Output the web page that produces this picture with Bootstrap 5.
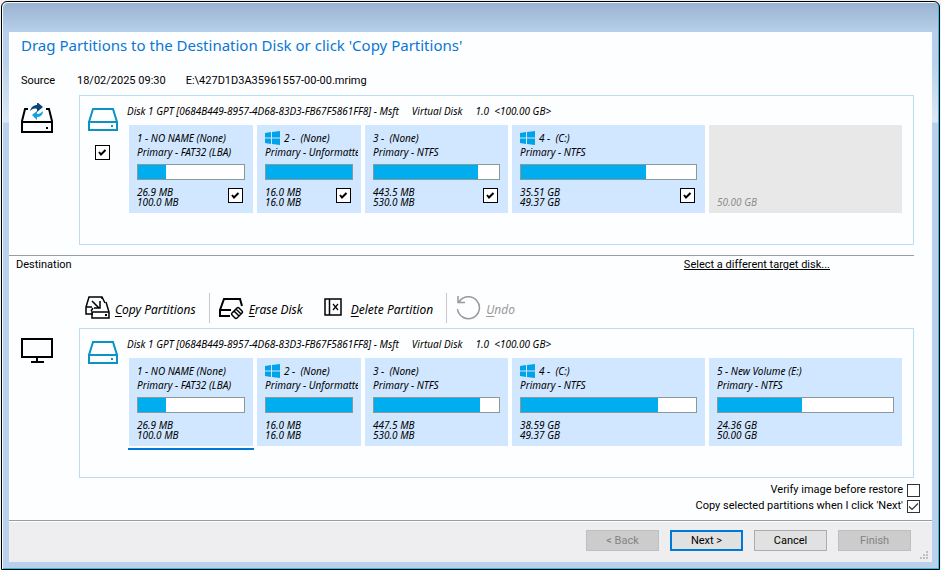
<!DOCTYPE html>
<html lang="en">
<head>
<meta charset="utf-8">
<meta name="viewport" content="width=device-width, initial-scale=1">
<title>Copy Partitions</title>
<link href="https://cdn.jsdelivr.net/npm/bootstrap@5.3.0/dist/css/bootstrap.min.css" rel="stylesheet">
<style>
  body { background: #f0f0f0; font-family: Tahoma, Roboto, "Open Sans", sans-serif; font-size: 11px; line-height: 14px; color: #000; }
  .window-frame { min-height: calc(100vh - 1px); margin: 1px 1px 0; padding: 0 7px 7px; border: 1px solid #000; border-radius: 6px 6px 0 0;
    box-shadow: inset 1px 1px #f4fbff, inset -1px -1px #22c3e6;
    background: linear-gradient(#98b2d1 0, #b7cfe9 30px, #b9d1ea 60px, #dce8f6 120px, #b9d1ea 121px); }
  .title-strip { height: 30px; }
  .page-body { background: #fdfeff; padding-right: 18px; }
  .page-title { font-family: "Noto Sans", sans-serif; font-size: 15px; line-height: 20px; color: #0b76d4; padding: 3px 0 0 12px; }
  .side-col { width: 70px; flex: none; padding-left: 12px; }
  .source-row { padding: 19px 0 7px; gap: 20px; }
  .source-row .side-col { margin-right: -22px; }
  .disk-panel { border: 1px solid #bcdcf4; min-height: 150px; padding: 8px 11px 0 8px; }
  .disk-col { width: 41px; flex: none; padding-top: 3px; }
  .fine { font-family: "Noto Sans", sans-serif; font-size: 10px; font-style: italic; white-space: pre; }
  .disk-title { line-height: 14px; margin: 0 0 7px -2px; }
  .parts { display: grid; grid-template-columns: 124fr 104fr 143fr 193fr 193fr; gap: 4px; }
  .part { position: relative; min-width: 0; height: 88px; background: #d1e7ff; padding: 6px 3px 6px 8px; }
  .part-free { background: #e8e8e8; color: #8c8c8c; }
  .part-selected::after { content: ""; position: absolute; left: -1px; right: -1px; bottom: -4px; height: 2px; background: #0078d7; }
  .part-line { height: 14px; line-height: 14px; overflow: hidden; }
  .usage { height: 16px; margin: 5px 5px 7px 0; border: 1px solid #8a9a98; border-radius: 0; background: #fff; }
  .usage .progress-bar { background: #00adef; }
  .sizes { line-height: 10px; }
  .form-check-input.tick { width: 15px; height: 15px; margin: 1px 7px 0 0; border: 1px solid #000; border-radius: 0; background: #fff; flex: none; }
  .form-check-input.tick:checked { background: #fff url("data:image/svg+xml,%3Csvg xmlns='http://www.w3.org/2000/svg' viewBox='0 0 13 13'%3E%3Cpath d='M3 6l2 2.500 4.500-4.500' fill='none' stroke='%23000' stroke-width='2'/%3E%3C/svg%3E") center/13px; }
  .form-check-input.option { width: 13px; height: 13px; margin: 0; border: 1px solid #333; border-radius: 0; background: #fff; }
  .form-check-input.option:checked { background: #fff url("data:image/svg+xml,%3Csvg xmlns='http://www.w3.org/2000/svg' viewBox='0 0 11 11'%3E%3Cpath d='M1 5.500l3 3L10 2.500' fill='none' stroke='%23333' stroke-width='1.200'/%3E%3C/svg%3E") center/11px; }
  .form-check-input.disk-tick { margin: 14px 0 0 7px; }
  .rule { height: 1px; background: #9b9c9f; }
  .section-rule { margin-top: 10px; }
  .target-row { padding: 2px 0 0 7px; }
  .target-link { color: #000; margin-right: 84px; }
  .tools { height: 30px; margin: 21px 0 5px 76px; font-family: "Noto Sans", sans-serif; font-size: 12px; font-style: italic; }
  .tool { border: 0; border-radius: 0; padding: 0; font: inherit; line-height: 16px; color: #000; display: flex; align-items: center; gap: 5px; }
  .tool span { padding-top: 4px; }
  .tool u { text-underline-offset: 2px; }
  .tool:disabled { border: 0; color: #999; opacity: 1; }
  .del-tool { margin-left: 21px; gap: 9px; }
  .tool-sep { width: 1px; height: 30px; background: #c8c8cc; margin: 0 9px 0 13px; }
  .options { padding: 4px 0 6px; margin-right: -6px; }
  .options .opt { height: 16px; gap: 4px; }
  .actions { background: #eeeef0; border-top: 1px solid #fff; padding: 8px 21px 0 0; height: 41px; gap: 11px; position: relative; }
  .dlg-btn { width: 73px; height: 21px; padding: 0; border: 1px solid #adadad; border-radius: 0; background: #e1e1e1; color: #000; font-size: 11px; line-height: 14px; }
  .dlg-btn.is-default { border: 2px solid #0078d7; }
  .dlg-btn:disabled { background: #ccc; border-color: #bfbfbf; color: #838383; opacity: 1; }
  .grip { position: absolute; right: 4px; bottom: 3px; }
  svg { display: block; flex: none; }
</style>
</head>
<body>
<svg width="0" height="0" class="position-absolute" aria-hidden="true">
  <symbol id="drive" viewBox="0 0 30 24"><path d="M1 15L5 2H25L29 15V23H1V15H29" fill="none" stroke="#0a93c3" stroke-width="2"/><path d="M23 18h2v2h-2z" fill="#0a93c3"/></symbol>
  <symbol id="winlogo" viewBox="0 0 15 14"><path d="M0 2L6 1V6.500H0zM7 .900L15 0V6.500H7zM0 7.500H6V13L0 12zM7 7.500H15V14L7 13z" fill="#00a2e8"/></symbol>
</svg>

<div class="window-frame d-flex flex-column">
  <div class="title-strip"></div>
  <main class="page-body flex-grow-1">
    <h1 class="page-title m-0 fw-normal">Drag Partitions to the Destination Disk or click 'Copy Partitions'</h1>

    <section aria-label="Source">
      <div class="source-row d-flex"><div class="side-col">Source</div><span>18/02/2025 09:30</span><span>E:\427D1D3A35961557-00-00.mrimg</span></div>
      <div class="d-flex">
        <div class="side-col pt-2">
          <svg width="32" height="30" viewBox="0 0 32 30" aria-hidden="true"><path d="M7 6H4L1 18V29H31V18L28 6H25M1 19H31" fill="none" stroke="#000" stroke-width="2"/><path d="M25 24h2v2h-2z"/><path d="M9 8C10 4 13 2 16 2V-1L22 4L16 9V6C13 5 11 6 9 8z" fill="#0c4679"/><path d="M22 8C22 12 19 14 16 14V17L11 12L16 8V11C19 11 20 10 22 8z" fill="#16a0df"/></svg>
        </div>
        <div class="disk-panel d-flex flex-grow-1">
          <div class="disk-col"><svg width="30" height="24" aria-hidden="true"><use href="#drive"/></svg><input type="checkbox" class="form-check-input tick disk-tick d-block" checked aria-label="Disk 1"></div>
          <div class="flex-grow-1">
            <div class="disk-title fine">Disk 1 GPT [0684B449-8957-4D68-83D3-FB67F5861FF8] - Msft     Virtual Disk     1.0  &lt;100.00 GB&gt;</div>
            <div class="parts">
              <div class="part"><div class="part-line fine">1 - NO NAME (None)</div><div class="part-line fine">Primary - FAT32 (LBA)</div><div class="progress usage"><div class="progress-bar" style="width:26%"></div></div><div class="d-flex justify-content-between"><div class="sizes fine">26.9 MB<br>100.0 MB</div><input type="checkbox" class="form-check-input tick" checked aria-label="Partition 1"></div></div>
              <div class="part"><div class="part-line fine d-flex gap-1"><svg width="15" height="14" aria-hidden="true"><use href="#winlogo"/></svg>2 -  (None)</div><div class="part-line fine">Primary - Unformatted</div><div class="progress usage"><div class="progress-bar" style="width:100%"></div></div><div class="d-flex justify-content-between"><div class="sizes fine">16.0 MB<br>16.0 MB</div><input type="checkbox" class="form-check-input tick" checked aria-label="Partition 2"></div></div>
              <div class="part"><div class="part-line fine">3 -  (None)</div><div class="part-line fine">Primary - NTFS</div><div class="progress usage"><div class="progress-bar" style="width:83.5%"></div></div><div class="d-flex justify-content-between"><div class="sizes fine">443.5 MB<br>530.0 MB</div><input type="checkbox" class="form-check-input tick" checked aria-label="Partition 3"></div></div>
              <div class="part"><div class="part-line fine d-flex gap-1"><svg width="15" height="14" aria-hidden="true"><use href="#winlogo"/></svg>4 -  (C:)</div><div class="part-line fine">Primary - NTFS</div><div class="progress usage"><div class="progress-bar" style="width:71.5%"></div></div><div class="d-flex justify-content-between"><div class="sizes fine">35.51 GB<br>49.37 GB</div><input type="checkbox" class="form-check-input tick" checked aria-label="Partition 4"></div></div>
              <div class="part part-free d-flex align-items-end"><div class="sizes fine">50.00 GB</div></div>
            </div>
          </div>
        </div>
      </div>
    </section>

    <div class="rule section-rule"></div>

    <section aria-label="Destination">
      <div class="target-row d-flex justify-content-between"><span>Destination</span><a href="#" class="target-link">Select a different target disk...</a></div>
      <div class="tools d-flex align-items-center">
        <button type="button" class="btn tool"><svg width="25" height="24" viewBox="0 0 25 24" aria-hidden="true"><path d="M8 18H1V11L4 1H17L20 7M1 11H7" fill="none" stroke="#000" stroke-width="1.500"/><path d="M6 15L8 12M21 6L24 16V22H7V16H24M17 1V3" fill="none" stroke="#000" stroke-width="1.500"/><path d="M7 5L14 12M15 5V12H9" fill="none" stroke="#000" stroke-width="1.500"/><path d="M20 18h2v2h-2z"/></svg><span><u>C</u>opy Partitions</span></button>
        <div class="tool-sep"></div>
        <button type="button" class="btn tool"><svg width="25" height="24" viewBox="0 0 25 24" aria-hidden="true"><path d="M11 20H1V14L5 3H21L23 10M1 14H12" fill="none" stroke="#000" stroke-width="2"/><path d="M13 17L18 12Q19 11 20 12L23 15Q24 16 23 17L18 22Q17 23 16 22L13 19Q12 18 13 17zM15 15L20 20M17 13L22 18" fill="none" stroke="#000" stroke-width="1.500"/></svg><span><u>E</u>rase Disk</span></button>
        <button type="button" class="btn tool del-tool"><svg width="18" height="24" viewBox="0 0 18 24" aria-hidden="true"><path d="M1 3H17V19H1zM5.500 3V19" fill="none" stroke="#000" stroke-width="1.500"/><path d="M9 8L14 14M14 8L9 14" fill="none" stroke="#000" stroke-width="1.200"/></svg><span><u>D</u>elete Partition</span></button>
        <div class="tool-sep"></div>
        <button type="button" class="btn tool" disabled><svg width="25" height="26" viewBox="0 0 25 26" aria-hidden="true"><path d="M3 7A11 11 0 1 1 1.500 14M2 1V7.500H9" fill="none" stroke="#999" stroke-width="1.500"/></svg><span><u>U</u>ndo</span></button>
      </div>
      <div class="d-flex">
        <div class="side-col pt-2">
          <svg width="32" height="28" viewBox="0 0 32 28" aria-hidden="true"><path d="M1 3H31V21H1zM16 21V26M10 26H23" fill="none" stroke="#000" stroke-width="2"/></svg>
        </div>
        <div class="disk-panel d-flex flex-grow-1">
          <div class="disk-col"><svg width="30" height="24" aria-hidden="true"><use href="#drive"/></svg></div>
          <div class="flex-grow-1">
            <div class="disk-title fine">Disk 1 GPT [0684B449-8957-4D68-83D3-FB67F5861FF8] - Msft     Virtual Disk     1.0  &lt;100.00 GB&gt;</div>
            <div class="parts">
              <div class="part part-selected"><div class="part-line fine">1 - NO NAME (None)</div><div class="part-line fine">Primary - FAT32 (LBA)</div><div class="progress usage"><div class="progress-bar" style="width:26%"></div></div><div class="sizes fine">26.9 MB<br>100.0 MB</div></div>
              <div class="part"><div class="part-line fine d-flex gap-1"><svg width="15" height="14" aria-hidden="true"><use href="#winlogo"/></svg>2 -  (None)</div><div class="part-line fine">Primary - Unformatted</div><div class="progress usage"><div class="progress-bar" style="width:100%"></div></div><div class="sizes fine">16.0 MB<br>16.0 MB</div></div>
              <div class="part"><div class="part-line fine">3 -  (None)</div><div class="part-line fine">Primary - NTFS</div><div class="progress usage"><div class="progress-bar" style="width:84.5%"></div></div><div class="sizes fine">447.5 MB<br>530.0 MB</div></div>
              <div class="part"><div class="part-line fine d-flex gap-1"><svg width="15" height="14" aria-hidden="true"><use href="#winlogo"/></svg>4 -  (C:)</div><div class="part-line fine">Primary - NTFS</div><div class="progress usage"><div class="progress-bar" style="width:78%"></div></div><div class="sizes fine">38.59 GB<br>49.37 GB</div></div>
              <div class="part"><div class="part-line fine">5 - New Volume (E:)</div><div class="part-line fine">Primary - NTFS</div><div class="progress usage"><div class="progress-bar" style="width:48%"></div></div><div class="sizes fine">24.36 GB<br>50.00 GB</div></div>
            </div>
          </div>
        </div>
      </div>
    </section>

    <div class="options d-flex flex-column align-items-end">
      <div class="opt d-flex align-items-center"><label for="verify">Verify image before restore</label><input id="verify" type="checkbox" class="form-check-input option"></div>
      <div class="opt d-flex align-items-center"><label for="copysel">Copy selected partitions when I click 'Next'</label><input id="copysel" type="checkbox" class="form-check-input option" checked></div>
    </div>
  </main>
  <div class="rule"></div>
  <footer class="actions d-flex justify-content-end align-items-start">
    <button type="button" class="btn dlg-btn" disabled>&lt; Back</button>
    <button type="button" class="btn dlg-btn is-default">Next &gt;</button>
    <button type="button" class="btn dlg-btn">Cancel</button>
    <button type="button" class="btn dlg-btn" disabled>Finish</button>
    <svg class="grip" width="8" height="8" viewBox="0 0 8 8" aria-hidden="true"><path d="M6 0h2v2H6zM3 3h2v2H3zM6 3h2v2H6zM0 6h2v2H0zM3 6h2v2H3zM6 6h2v2H6z" fill="#bfbfbf"/></svg>
  </footer>
</div>
<script src="https://cdn.jsdelivr.net/npm/bootstrap@5.3.0/dist/js/bootstrap.bundle.min.js"></script>
</body>
</html>
